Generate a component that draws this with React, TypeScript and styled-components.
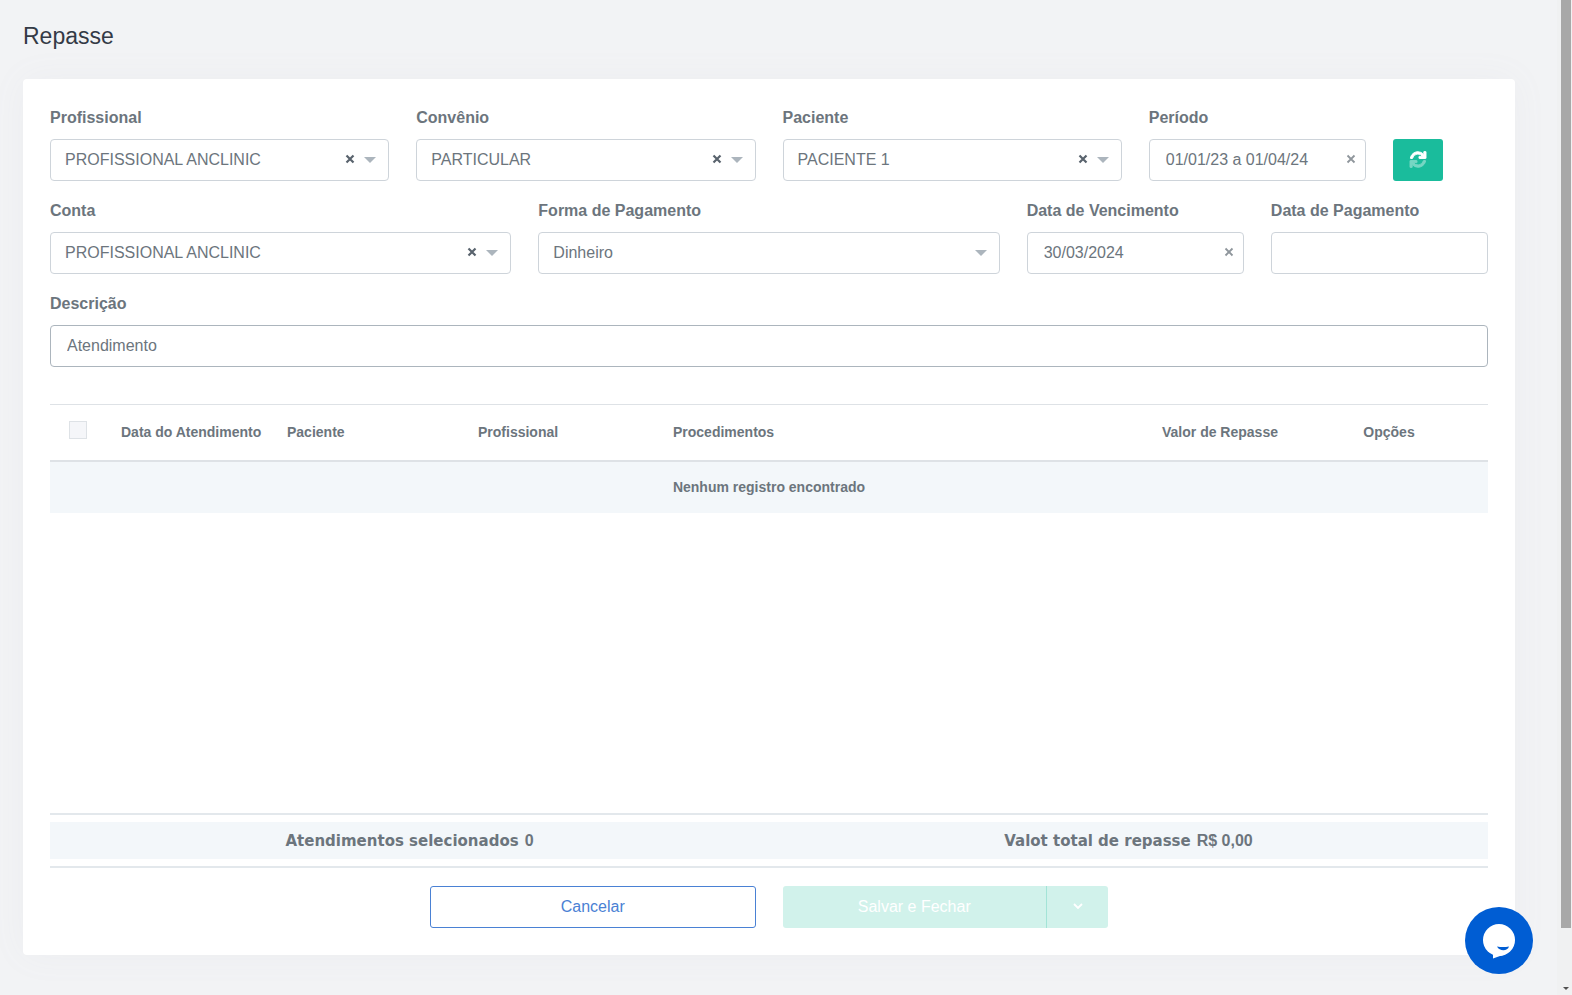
import React from "react";
import styled, { createGlobalStyle } from "styled-components";

const GlobalStyle = createGlobalStyle`
  *, *::before, *::after { box-sizing: border-box; }
  body {
    margin: 0;
    background: #f2f3f5;
    color: #6c757d;
    font-family: "Liberation Sans", Arial, sans-serif;
    font-size: 16px;
    line-height: 24px;
  }
  button, input, select { font: inherit; color: inherit; }
`;

const Shell = styled.div`
  display: flex;
  min-height: 100vh;
`;

const Page = styled.main`
  flex: 1;
  min-width: 0;
  padding: 0 42px 40px 23px;
`;

const Title = styled.h1`
  margin: 0;
  padding: 22px 0 29px;
  color: #343a46;
  font-size: 23px;
  font-weight: 400;
  line-height: 28px;
`;

const Card = styled.section`
  padding: 27px;
  border-radius: 4px;
  background: #fff;
  box-shadow: 0 0 36px rgba(154, 161, 171, 0.06);
`;

const Form = styled.form`
  margin: 0;
`;

const FieldGrid = styled.div`
  display: grid;
  grid-template-columns: repeat(12, minmax(0, 1fr));
  gap: 18px 27px;
  align-items: end;
`;

const Field = styled.div<{ $span: number }>`
  grid-column: span ${(p) => p.$span};
`;

const Label = styled.label`
  display: block;
  margin-bottom: 9px;
  font-weight: 700;
`;

const Control = styled.div<{ $strong?: boolean }>`
  display: flex;
  align-items: center;
  height: 42px;
  border: 1px solid ${(p) => (p.$strong ? "#acb5bd" : "#ced4da")};
  border-radius: 4px;
  background: #fff;
`;

const SelectInput = styled.select`
  flex: 1;
  min-width: 0;
  height: 100%;
  padding: 0 0 1px 14px;
  border: 0;
  outline: 0;
  background: transparent;
  appearance: none;
`;

const TextInput = styled.input`
  flex: 1;
  min-width: 0;
  height: 100%;
  padding: 0 0 1px 16px;
  border: 0;
  outline: 0;
  background: transparent;
`;

const ClearButton = styled.button<{ $light?: boolean }>`
  display: flex;
  margin: 0 9px 0 0;
  padding: 0 0 2px;
  border: 0;
  background: none;
  color: ${(p) => (p.$light ? "#8f969c" : "#59636d")};
`;

const Caret = styled.svg`
  display: block;
  flex: none;
  margin-right: 12px;
  pointer-events: none;
`;

const RefreshButton = styled.button`
  display: flex;
  align-items: center;
  justify-content: center;
  width: 50px;
  height: 42px;
  padding: 0 0 2px;
  border: 0;
  border-radius: 3px;
  background: #1abc9c;
  color: #fff;
`;

const TableArea = styled.div`
  min-height: 409px;
  margin-top: 37px;
`;

const Table = styled.table`
  width: 100%;
  border-collapse: collapse;
  table-layout: fixed;
  font-size: 14px;
`;

const HeadCell = styled.th<{ $width?: string; $align?: string }>`
  width: ${(p) => p.$width ?? "auto"};
  height: 56px;
  padding: 0 18px;
  border-top: 1px solid #dee2e6;
  border-bottom: 2px solid #dee2e6;
  text-align: ${(p) => p.$align ?? "left"};
  white-space: nowrap;
`;

const CheckBox = styled.input`
  display: block;
  width: 18px;
  height: 18px;
  margin: 0 0 4px 1px;
  border: 1px solid #dee2e6;
  background: #f5f6f9;
  appearance: none;
`;

const EmptyCell = styled.td`
  height: 52px;
  padding: 0;
  background: #f3f7fa;
  font-weight: 700;
  text-align: center;
`;

const Totals = styled.div`
  padding: 7px 0;
  border-top: 2px solid #e3e8ec;
  border-bottom: 2px solid #e3e8ec;
`;

const TotalsBand = styled.div`
  display: grid;
  grid-template-columns: 1fr 1fr;
  align-items: center;
  height: 37px;
  background: #f3f7fa;
  font-weight: 700;
  text-align: center;
`;

const TotalLabel = styled.span`
  margin-right: 6px;
  font-family: "DejaVu Sans", "Liberation Sans", sans-serif;
  font-size: 15px;
`;

const Actions = styled.div`
  display: grid;
  grid-template-columns: 1fr 1fr;
  gap: 27px;
  max-width: 678px;
  margin: 18px auto 0;
`;

const CancelButton = styled.button`
  height: 42px;
  padding: 0;
  border: 1px solid #4a81d4;
  border-radius: 3px;
  background: #fff;
  color: #4a81d4;
`;

const SplitButton = styled.div`
  display: flex;
  height: 42px;
  overflow: hidden;
  border-radius: 3px;
  background: #d1f2eb;
`;

const SaveButton = styled.button`
  flex: 1;
  padding: 0;
  border: 0;
  background: transparent;
  color: #fff;
`;

const MoreButton = styled.button`
  display: flex;
  align-items: center;
  justify-content: center;
  width: 62px;
  padding: 0 0 2px;
  border: 0;
  border-left: 1px solid #a3e4d7;
  background: transparent;
  color: #fff;
`;

const ScrollTrack = styled.div`
  position: sticky;
  top: 0;
  display: flex;
  flex-direction: column;
  justify-content: space-between;
  align-items: center;
  width: 15px;
  height: 100vh;
  padding: 0 1px 5px 4px;
  background: #f0f1f2;
`;

const ScrollThumb = styled.div`
  width: 10px;
  height: calc(100% - 62px);
  background: #a8a8a8;
`;

const ChatButton = styled.button`
  position: fixed;
  right: 39px;
  bottom: 21px;
  display: flex;
  align-items: center;
  justify-content: center;
  width: 68px;
  height: 67px;
  padding: 0;
  border: 0;
  border-radius: 50%;
  background: #005dd3;
`;

function Clear({ name, light }: { name: string; light?: boolean }) {
  return (
    <ClearButton type="button" aria-label={`Limpar ${name}`} $light={light}>
      <svg width="10" height="10" viewBox="0 0 10 10" aria-hidden="true">
        <path d="M1.500 1.500 L8.500 8.500 M8.500 1.500 L1.500 8.500" stroke="currentColor" strokeWidth={light ? 1.8 : 2.2} />
      </svg>
    </ClearButton>
  );
}

const SYNC_HALF =
  "M440.65 12.57l4 82.77A247.16 247.16 0 0 0 255.83 8C134.73 8 33.91 94.92 12.29 209.82A12 12 0 0 0 24.09 224h49.05a12 12 0 0 0 11.67-9.26 175.91 175.91 0 0 1 317-56.94l-101.46-4.86a12 12 0 0 0-12.57 12v47.41a12 12 0 0 0 12 12H500a12 12 0 0 0 12-12V12a12 12 0 0 0-12-12h-47.37a12 12 0 0 0-11.98 12.57z";

function SyncIcon() {
  return (
    <svg width="18" height="17" viewBox="-16 -16 544 544" fill="currentColor" stroke="currentColor" strokeWidth="30" aria-hidden="true">
      <path d={SYNC_HALF} />
      <path d={SYNC_HALF} opacity="0.4" transform="rotate(180 256 256)" />
    </svg>
  );
}

type SelectFieldProps = { id: string; label: string; value: string; span: number; clearable?: boolean };

function SelectField({ id, label, value, span, clearable = true }: SelectFieldProps) {
  return (
    <Field $span={span}>
      <Label htmlFor={id}>{label}</Label>
      <Control>
        <SelectInput id={id} defaultValue={value}>
          <option>{value}</option>
        </SelectInput>
        {clearable && <Clear name={label} />}
        <Caret width="12" height="6" viewBox="0 0 12 6" aria-hidden="true">
          <path d="M0 0 H12 L6 6 Z" fill="#acb5bd" />
        </Caret>
      </Control>
    </Field>
  );
}

type TextFieldProps = {
  id: string;
  label: string;
  value?: string;
  span: number;
  clearable?: boolean;
  strong?: boolean;
};

function TextField({ id, label, value = "", span, clearable, strong }: TextFieldProps) {
  return (
    <Field $span={span}>
      <Label htmlFor={id}>{label}</Label>
      <Control $strong={strong}>
        <TextInput id={id} type="text" defaultValue={value} />
        {clearable && <Clear name={label} light />}
      </Control>
    </Field>
  );
}

export default function App() {
  return (
    <>
      <GlobalStyle />
      <Shell>
        <Page>
          <Title>Repasse</Title>
          <Card>
            <Form onSubmit={(e) => e.preventDefault()}>
              <FieldGrid>
                <SelectField id="profissional" label="Profissional" value="PROFISSIONAL ANCLINIC" span={3} />
                <SelectField id="convenio" label="Convênio" value="PARTICULAR" span={3} />
                <SelectField id="paciente" label="Paciente" value="PACIENTE 1" span={3} />
                <TextField id="periodo" label="Período" value="01/01/23 a 01/04/24" span={2} clearable />
                <RefreshButton type="button" aria-label="Atualizar">
                  <SyncIcon />
                </RefreshButton>
                <SelectField id="conta" label="Conta" value="PROFISSIONAL ANCLINIC" span={4} />
                <SelectField id="forma" label="Forma de Pagamento" value="Dinheiro" span={4} clearable={false} />
                <TextField id="vencimento" label="Data de Vencimento" value="30/03/2024" span={2} clearable />
                <TextField id="pagamento" label="Data de Pagamento" span={2} />
                <TextField id="descricao" label="Descrição" value="Atendimento" span={12} strong />
              </FieldGrid>

              <TableArea>
                <Table>
                  <thead>
                    <tr>
                      <HeadCell $width="53px">
                        <CheckBox type="checkbox" aria-label="Selecionar todos" disabled />
                      </HeadCell>
                      <HeadCell $width="166px">Data do Atendimento</HeadCell>
                      <HeadCell $width="191px">Paciente</HeadCell>
                      <HeadCell $width="195px">Profissional</HeadCell>
                      <HeadCell>Procedimentos</HeadCell>
                      <HeadCell $width="146px" $align="center">Valor de Repasse</HeadCell>
                      <HeadCell $width="198px" $align="center">Opções</HeadCell>
                    </tr>
                  </thead>
                  <tbody>
                    <tr>
                      <EmptyCell colSpan={7}>Nenhum registro encontrado</EmptyCell>
                    </tr>
                  </tbody>
                </Table>
              </TableArea>

              <Totals>
                <TotalsBand>
                  <div><TotalLabel>Atendimentos selecionados</TotalLabel>0</div>
                  <div><TotalLabel>Valot total de repasse</TotalLabel>R$ 0,00</div>
                </TotalsBand>
              </Totals>

              <Actions>
                <CancelButton type="button">Cancelar</CancelButton>
                <SplitButton>
                  <SaveButton type="submit" disabled>Salvar e Fechar</SaveButton>
                  <MoreButton type="button" aria-label="Mais opções" disabled>
                    <svg width="10" height="6" viewBox="0 0 10 6" fill="none" aria-hidden="true">
                      <path d="M1 1 L5 5 L9 1" stroke="currentColor" strokeWidth="1.8" />
                    </svg>
                  </MoreButton>
                </SplitButton>
              </Actions>
            </Form>
          </Card>
        </Page>
        <ScrollTrack aria-hidden="true">
          <ScrollThumb />
          <svg width="6" height="3" viewBox="0 0 6 3">
            <path d="M0 0 H6 L3 3 Z" fill="#505050" />
          </svg>
        </ScrollTrack>
      </Shell>
      <ChatButton type="button" aria-label="Abrir chat">
        <svg width="34" height="36" viewBox="0 0 34 36" aria-hidden="true">
          <circle cx="17" cy="17" r="16" fill="#fff" />
          <path d="M11 29 V35.500 L25 30.500 Z" fill="#fff" />
          <path d="M15 23.500 Q21 24.500 27 23.500 C25.500 28.500 17.500 28.500 15 23.500 Z" fill="#005dd3" />
        </svg>
      </ChatButton>
    </>
  );
}
